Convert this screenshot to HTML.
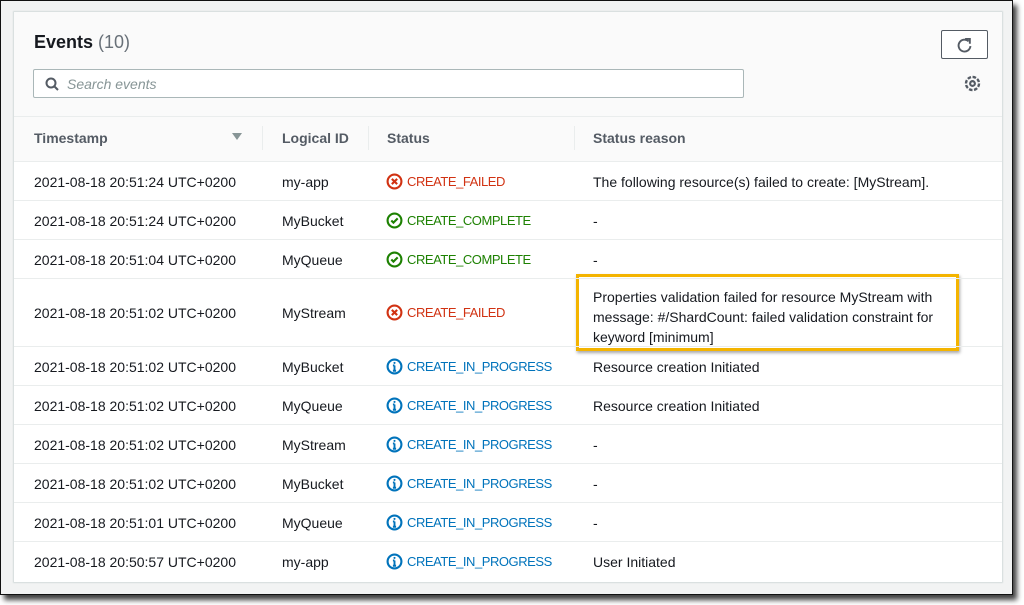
<!DOCTYPE html>
<html><head><style>
*{margin:0;padding:0;box-sizing:border-box}
body{width:1024px;height:605px;background:#fff;font-family:"Liberation Sans",sans-serif;position:relative;overflow:hidden;color:#16191f}
.frame{position:absolute;left:0;top:0;width:1013px;height:595px;background:#f2f3f3;border:1px solid #111;box-shadow:4px 5px 5px rgba(0,0,0,.75)}
.panel{position:absolute;left:14px;top:12px;width:988px;height:570px;background:#fff;box-shadow:0 0 1px 1px #d5dbdb}
.head{position:absolute;left:0;top:0;width:988px;height:150px;background:#fafafa}
h1{position:absolute;left:20px;top:20px;font-size:18px;font-weight:bold;color:#16191f}
h1 span{font-weight:normal;color:#687078}
.search{position:absolute;left:19px;top:57px;width:711px;height:29px;border:1px solid #aab7b8;border-radius:2px;background:#fff}
.search i{position:absolute;left:33px;top:6px;font-size:14px;color:#879596;font-style:italic}
.btn{position:absolute;left:927px;top:18px;width:47px;height:29px;border:1px solid #545b64;border-radius:2px;background:#fff}
.hr{position:absolute;left:0;width:988px;height:1px;background:#eaeded}
.th{position:absolute;top:118px;font-size:14px;font-weight:bold;color:#545b64}
.div{position:absolute;top:114px;width:1px;height:24px;background:#eaeded}
.row{position:absolute;left:0;width:988px;font-size:14px}
.row div{position:absolute;white-space:nowrap}
.c1{left:20px}.c2{left:268px}.c3{left:372px;display:flex;align-items:center;gap:4px;font-size:13px;letter-spacing:-0.45px;margin-top:-1px}.c4{left:579px}
.f{color:#d13212}.ok{color:#1d8102}.ip{color:#0073bb}
.box{position:absolute;left:576px;top:274px;width:383px;height:77px;border:3px solid #f4b400;background:#fff;box-shadow:1px 2px 3px rgba(0,0,0,.35);padding:10px 14px;font-size:14px;line-height:20px}
</style></head><body>
<div class="frame"></div>
<div class="panel">
<div class="head"></div>
<h1>Events <span>(10)</span></h1>
<div class="search"><svg style="position:absolute;left:11px;top:7px" width="14" height="14" viewBox="0 0 14 14"><circle cx="6" cy="6" r="4.5" fill="none" stroke="#545b64" stroke-width="2"/><path d="M9.5 9.5L13 13" stroke="#545b64" stroke-width="2"/></svg><i>Search events</i></div>
<div class="btn"><svg style="position:absolute;left:13px;top:5px" width="19" height="19" viewBox="0 0 16 16"><path d="M13 8.5A5 5 0 1 1 11.5 4.5" fill="none" stroke="#545b64" stroke-width="1.6"/><path d="M8.5 2.5h4v4" fill="none" stroke="#545b64" stroke-width="1.6"/></svg></div>
<svg style="position:absolute;left:949px;top:62px" width="19" height="19" viewBox="0 0 16 16"><circle cx="8" cy="8" r="5.5" fill="none" stroke="#545b64" stroke-width="2" stroke-dasharray="3 1.3"/><circle cx="8" cy="8" r="2" fill="none" stroke="#545b64" stroke-width="1.8"/></svg>
<div class="hr" style="top:104px"></div>
<div class="th" style="left:20px">Timestamp</div>
<svg style="position:absolute;left:218px;top:121px" width="10" height="8"><path d="M0 0h10L5 7z" fill="#879596"/></svg>
<div class="div" style="left:248px"></div><div class="div" style="left:354px"></div><div class="div" style="left:560px"></div>
<div class="th" style="left:268px">Logical ID</div>
<div class="th" style="left:373px">Status</div>
<div class="th" style="left:579px">Status reason</div>
<div class="hr" style="top:149px"></div>
</div>
<div class="box">Properties validation failed for resource MyStream with message: #/ShardCount: failed validation constraint for keyword [minimum]</div>
<div style="position:absolute;left:14px;top:0">
<div class="row" style="top:162px;height:39px"><div class="c1" style="top:12px">2021-08-18 20:51:24 UTC+0200</div><div class="c2" style="top:12px">my-app</div><div class="c3 f" style="top:12px"><svg width="17" height="17" viewBox="0 0 16 16"><circle cx="8" cy="8" r="6.5" fill="none" stroke="#d13212" stroke-width="2"/><path d="M5.5 5.5l5 5M10.5 5.5l-5 5" stroke="#d13212" stroke-width="2"/></svg>CREATE_FAILED</div><div class="c4" style="top:12px">The following resource(s) failed to create: [MyStream].</div></div>
<div class="hr" style="top:200px"></div>
<div class="row" style="top:201px"><div class="c1" style="top:12px">2021-08-18 20:51:24 UTC+0200</div><div class="c2" style="top:12px">MyBucket</div><div class="c3 ok" style="top:12px"><svg width="17" height="17" viewBox="0 0 16 16"><circle cx="8" cy="8" r="6.5" fill="none" stroke="#1d8102" stroke-width="2"/><path d="M5 8l2 2 4-4" fill="none" stroke="#1d8102" stroke-width="2"/></svg>CREATE_COMPLETE</div><div class="c4" style="top:12px">-</div></div>
<div class="hr" style="top:239px"></div>
<div class="row" style="top:240px"><div class="c1" style="top:12px">2021-08-18 20:51:04 UTC+0200</div><div class="c2" style="top:12px">MyQueue</div><div class="c3 ok" style="top:12px"><svg width="17" height="17" viewBox="0 0 16 16"><circle cx="8" cy="8" r="6.5" fill="none" stroke="#1d8102" stroke-width="2"/><path d="M5 8l2 2 4-4" fill="none" stroke="#1d8102" stroke-width="2"/></svg>CREATE_COMPLETE</div><div class="c4" style="top:12px">-</div></div>
<div class="hr" style="top:278px"></div>
<div class="row" style="top:279px"><div class="c1" style="top:26px">2021-08-18 20:51:02 UTC+0200</div><div class="c2" style="top:26px">MyStream</div><div class="c3 f" style="top:26px"><svg width="17" height="17" viewBox="0 0 16 16"><circle cx="8" cy="8" r="6.5" fill="none" stroke="#d13212" stroke-width="2"/><path d="M5.5 5.5l5 5M10.5 5.5l-5 5" stroke="#d13212" stroke-width="2"/></svg>CREATE_FAILED</div></div>
<div class="hr" style="top:346px"></div>
</div>
<div style="position:absolute;left:14px;top:0">
<div class="row" style="top:347px"><div class="c1" style="top:12px">2021-08-18 20:51:02 UTC+0200</div><div class="c2" style="top:12px">MyBucket</div><div class="c3 ip" style="top:12px"><svg width="17" height="17" viewBox="0 0 16 16"><circle cx="8" cy="8" r="6.5" fill="none" stroke="#0073bb" stroke-width="2"/><path d="M8 7v5M6.5 12h3M6.5 7H8" stroke="#0073bb" stroke-width="1.8"/><circle cx="8" cy="4.6" r="1" fill="#0073bb"/></svg>CREATE_IN_PROGRESS</div><div class="c4" style="top:12px">Resource creation Initiated</div></div>
<div class="hr" style="top:385px"></div>
<div class="row" style="top:386px"><div class="c1" style="top:12px">2021-08-18 20:51:02 UTC+0200</div><div class="c2" style="top:12px">MyQueue</div><div class="c3 ip" style="top:12px"><svg width="17" height="17" viewBox="0 0 16 16"><circle cx="8" cy="8" r="6.5" fill="none" stroke="#0073bb" stroke-width="2"/><path d="M8 7v5M6.5 12h3M6.5 7H8" stroke="#0073bb" stroke-width="1.8"/><circle cx="8" cy="4.6" r="1" fill="#0073bb"/></svg>CREATE_IN_PROGRESS</div><div class="c4" style="top:12px">Resource creation Initiated</div></div>
<div class="hr" style="top:424px"></div>
<div class="row" style="top:425px"><div class="c1" style="top:12px">2021-08-18 20:51:02 UTC+0200</div><div class="c2" style="top:12px">MyStream</div><div class="c3 ip" style="top:12px"><svg width="17" height="17" viewBox="0 0 16 16"><circle cx="8" cy="8" r="6.5" fill="none" stroke="#0073bb" stroke-width="2"/><path d="M8 7v5M6.5 12h3M6.5 7H8" stroke="#0073bb" stroke-width="1.8"/><circle cx="8" cy="4.6" r="1" fill="#0073bb"/></svg>CREATE_IN_PROGRESS</div><div class="c4" style="top:12px">-</div></div>
<div class="hr" style="top:463px"></div>
<div class="row" style="top:464px"><div class="c1" style="top:12px">2021-08-18 20:51:02 UTC+0200</div><div class="c2" style="top:12px">MyBucket</div><div class="c3 ip" style="top:12px"><svg width="17" height="17" viewBox="0 0 16 16"><circle cx="8" cy="8" r="6.5" fill="none" stroke="#0073bb" stroke-width="2"/><path d="M8 7v5M6.5 12h3M6.5 7H8" stroke="#0073bb" stroke-width="1.8"/><circle cx="8" cy="4.6" r="1" fill="#0073bb"/></svg>CREATE_IN_PROGRESS</div><div class="c4" style="top:12px">-</div></div>
<div class="hr" style="top:502px"></div>
<div class="row" style="top:503px"><div class="c1" style="top:12px">2021-08-18 20:51:01 UTC+0200</div><div class="c2" style="top:12px">MyQueue</div><div class="c3 ip" style="top:12px"><svg width="17" height="17" viewBox="0 0 16 16"><circle cx="8" cy="8" r="6.5" fill="none" stroke="#0073bb" stroke-width="2"/><path d="M8 7v5M6.5 12h3M6.5 7H8" stroke="#0073bb" stroke-width="1.8"/><circle cx="8" cy="4.6" r="1" fill="#0073bb"/></svg>CREATE_IN_PROGRESS</div><div class="c4" style="top:12px">-</div></div>
<div class="hr" style="top:541px"></div>
<div class="row" style="top:542px"><div class="c1" style="top:12px">2021-08-18 20:50:57 UTC+0200</div><div class="c2" style="top:12px">my-app</div><div class="c3 ip" style="top:12px"><svg width="17" height="17" viewBox="0 0 16 16"><circle cx="8" cy="8" r="6.5" fill="none" stroke="#0073bb" stroke-width="2"/><path d="M8 7v5M6.5 12h3M6.5 7H8" stroke="#0073bb" stroke-width="1.8"/><circle cx="8" cy="4.6" r="1" fill="#0073bb"/></svg>CREATE_IN_PROGRESS</div><div class="c4" style="top:12px">User Initiated</div></div>
</div>
</body></html>
